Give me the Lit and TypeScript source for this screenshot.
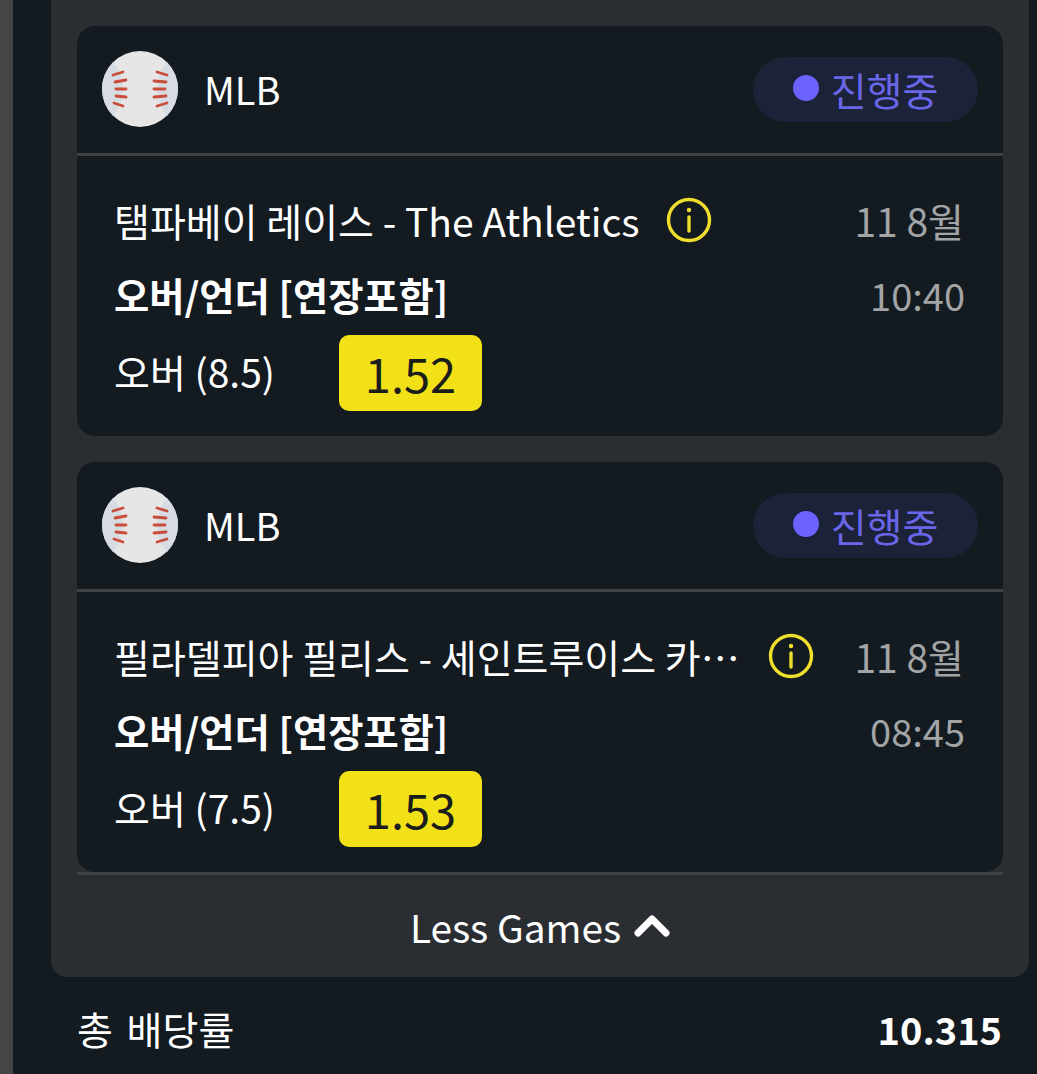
import { LitElement, html, css, svg } from "lit";
import { customElement } from "lit/decorators.js";

interface Game {
  title: string;
  time: string;
  pick: string;
  odds: string;
  cut?: boolean;
}

const games: Game[] = [
  { title: "탬파베이 레이스 - The Athletics", time: "10:40", pick: "오버 (8.5)", odds: "1.52" },
  { title: "필라델피아 필리스 - 세인트루이스 카…", time: "08:45", pick: "오버 (7.5)", odds: "1.53", cut: true },
];

const stitches = [
  [113, 75, 123, 72],
  [115, 82, 126, 80],
  [116, 89, 126, 89],
  [116, 96, 126, 97],
  [114, 103, 123, 106],
  [157, 72, 167, 75],
  [154, 81, 166, 82],
  [154, 89, 165, 89],
  [154, 97, 166, 96],
  [157, 106, 167, 103],
];

const ball = html`<svg class="ball" viewBox="102 51 76 76" width="76" height="76">
  <circle cx="140" cy="89" r="38" fill="#e6e6e7"></circle>
  <path d="M113 62 Q102 74 102 89 Q102 104 113 116 Q123 104 123 89 Q123 74 113 62Z" fill="#d6dce1"></path>
  <path d="M167 62 Q178 74 178 89 Q178 104 167 116 Q157 104 157 89 Q157 74 167 62Z" fill="#d6dce1"></path>
  ${stitches.map(
    ([a, b, c, d]) => svg`<line x1=${a} y1=${b} x2=${c} y2=${d} stroke="#c94c3d" stroke-width="2.8" stroke-linecap="round"></line>`
  )}
</svg>`;

@customElement("app-root")
export class AppRoot extends LitElement {
  static styles = css`
    :host {
      display: flex;
      width: 1037px;
      height: 1074px;
      overflow: hidden;
      background: #131a20;
      color: #fff;
      font-family: "Noto Sans CJK KR", "Noto Sans", sans-serif;
    }
    .strip {
      width: 13px;
      flex: none;
      background: #454545;
    }
    .main {
      margin-left: 38px;
      width: 978px;
      flex: none;
    }
    .panel {
      height: 977px;
      box-sizing: border-box;
      padding: 26px 26px 0;
      background: #2a2e32;
      border-radius: 0 0 16px 16px;
    }
    .card {
      height: 410px;
      background: #131a20;
      border-radius: 18px;
    }
    .card + .card {
      margin-top: 26px;
    }
    .head {
      height: 127px;
      display: flex;
      align-items: center;
      padding: 0 25px;
      border-bottom: 3px solid #3e4245;
    }
    .ball {
      flex: none;
      margin-top: -1px;
    }
    .league {
      margin-left: 26px;
      font-size: 38px;
      line-height: 1;
      flex: 1;
      margin-top: -2px;
    }
    .status {
      width: 225px;
      height: 65px;
      border-radius: 33px;
      background: #1c2238;
      color: #6a66e8;
      font-size: 39px;
      line-height: 1;
      display: flex;
      align-items: center;
      justify-content: center;
      gap: 12px;
      margin-top: -1px;
    }
    .dot {
      width: 26px;
      height: 26px;
      border-radius: 50%;
      background: #6c63ff;
      margin-top: -2px;
    }
    .body {
      padding: 40px 38px 0 37px;
    }
    .row {
      display: flex;
      align-items: center;
    }
    .title-row {
      height: 48px;
    }
    .title {
      font-size: 39px;
      line-height: 48px;
      white-space: nowrap;
      flex: none;
    }
    .title.cut {
      width: 628px;
    }
    .info {
      flex: none;
      margin-left: 26px;
    }
    .date,
    .time {
      margin-left: auto;
      color: #a2a4a5;
      font-size: 38px;
      line-height: 48px;
      white-space: nowrap;
    }
    .date {
      font-size: 39px;
      margin-right: 1px;
    }
    .market-row {
      height: 48px;
      margin-top: 27px;
    }
    .market {
      font-size: 38.3px;
      font-weight: 700;
      line-height: 48px;
    }
    .pick-row {
      height: 76px;
      margin-top: 16px;
    }
    .pick {
      width: 225px;
      font-size: 39px;
      line-height: 76px;
      margin-top: -4px;
    }
    .odds {
      width: 143px;
      height: 76px;
      border-radius: 10px;
      background: #f3e118;
      color: #1b1d1b;
      font-size: 47px;
      line-height: 76px;
      text-align: center;
    }
    .more {
      border-top: 3px solid #3e4245;
      height: 102px;
      display: flex;
      align-items: center;
      justify-content: center;
      gap: 13px;
      font-size: 38.8px;
    }
    .more svg {
      margin-top: -3px;
    }
    .total {
      display: flex;
      justify-content: space-between;
      align-items: center;
      padding: 0 27px 0 26px;
      height: 102px;
      font-size: 39px;
      word-spacing: 5px;
    }
    .total b {
      font-size: 38px;
      font-weight: 700;
    }
  `;

  private renderCard(g: Game) {
    return html`<div class="card">
      <div class="head">
        ${ball}
        <div class="league">MLB</div>
        <div class="status"><span class="dot"></span>진행중</div>
      </div>
      <div class="body">
        <div class="row title-row">
          <div class="title ${g.cut ? "cut" : ""}">${g.title}</div>
          <svg class="info" width="46" height="46" viewBox="0 0 46 46" fill="none" stroke="#f0de2c" stroke-width="3.4">
            <circle cx="23" cy="23" r="20.5"></circle>
            <line x1="23" y1="20" x2="23" y2="34" stroke-linecap="round"></line>
            <circle cx="23" cy="13" r="2.2" fill="#f0de2c" stroke="none"></circle>
          </svg>
          <div class="date">11 8월</div>
        </div>
        <div class="row market-row">
          <div class="market">오버/언더 [연장포함]</div>
          <div class="time">${g.time}</div>
        </div>
        <div class="row pick-row">
          <div class="pick">${g.pick}</div>
          <div class="odds">${g.odds}</div>
        </div>
      </div>
    </div>`;
  }

  render() {
    return html`
      <div class="strip"></div>
      <div class="main">
        <div class="panel">
          ${games.map((g) => this.renderCard(g))}
          <div class="more">
            Less Games
            <svg width="36" height="24" viewBox="0 0 36 24" fill="none" stroke="#fff" stroke-width="7" stroke-linecap="round" stroke-linejoin="round">
              <path d="M4 20 L18 6 L32 20"></path>
            </svg>
          </div>
        </div>
        <div class="total"><span>총 배당률</span><b>10.315</b></div>
      </div>
    `;
  }
}
